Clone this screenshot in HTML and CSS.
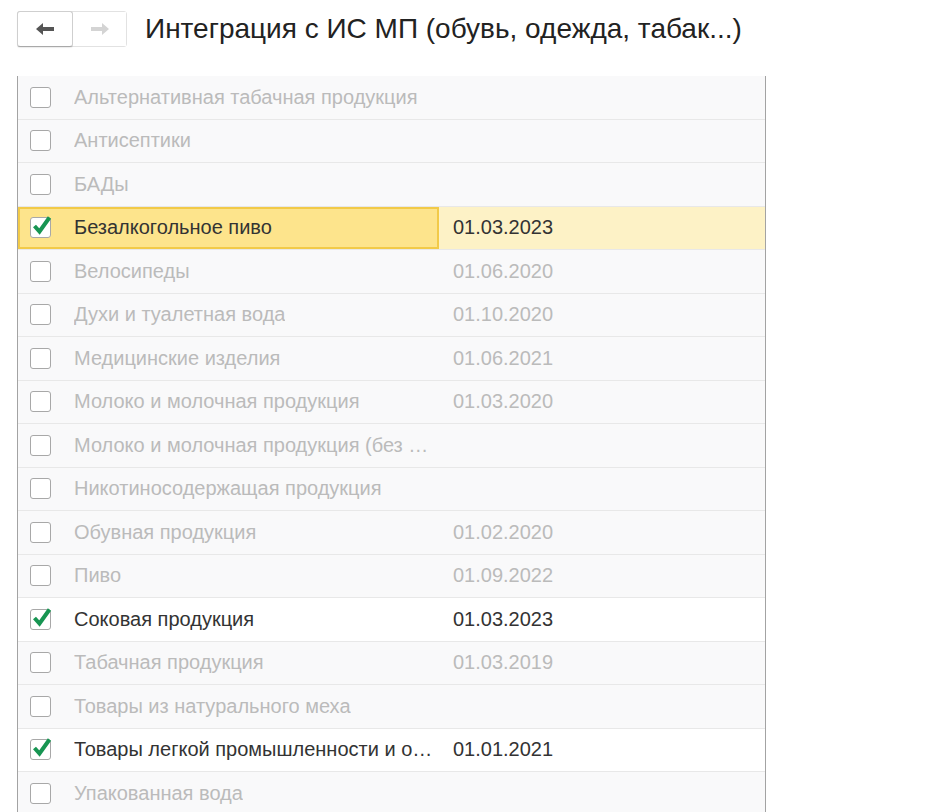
FILE: index.html
```html
<!DOCTYPE html>
<html lang="ru">
<head>
<meta charset="UTF-8">
<title>Интеграция с ИС МП</title>
<link rel="stylesheet" href="styles.css">
</head>
<body>
<div class="header">
    <div class="nav">
        <button class="nav-btn back" type="button">
            <svg width="20" height="14" viewBox="0 0 20 14"><path d="M1 7 L8 1 L8 5 L19 5 L19 9 L8 9 L8 13 Z" fill="#555"/></svg>
        </button>
        <button class="nav-btn fwd" type="button">
            <svg width="20" height="14" viewBox="0 0 20 14"><path d="M19 7 L12 1 L12 5 L1 5 L1 9 L12 9 L12 13 Z" fill="#d4d4d4"/></svg>
        </button>
    </div>
    <h1 class="title">Интеграция с ИС МП (обувь, одежда, табак...)</h1>
</div>

<div class="list">
    <div class="row"><div class="name"><span class="cb"></span><span class="txt">Альтернативная табачная продукция</span></div><div class="date"></div></div>
    <div class="row"><div class="name"><span class="cb"></span><span class="txt">Антисептики</span></div><div class="date"></div></div>
    <div class="row"><div class="name"><span class="cb"></span><span class="txt">БАДы</span></div><div class="date"></div></div>
    <div class="row on current"><div class="name"><span class="cb"><svg width="22" height="22" viewBox="0 0 22 22"><path d="M3.5 10 L8.5 15.5 L18.5 1.5" fill="none" stroke="#179552" stroke-width="4"/></svg></span><span class="txt">Безалкогольное пиво</span></div><div class="date">01.03.2023</div></div>
    <div class="row"><div class="name"><span class="cb"></span><span class="txt">Велосипеды</span></div><div class="date">01.06.2020</div></div>
    <div class="row"><div class="name"><span class="cb"></span><span class="txt">Духи и туалетная вода</span></div><div class="date">01.10.2020</div></div>
    <div class="row"><div class="name"><span class="cb"></span><span class="txt">Медицинские изделия</span></div><div class="date">01.06.2021</div></div>
    <div class="row"><div class="name"><span class="cb"></span><span class="txt">Молоко и молочная продукция</span></div><div class="date">01.03.2020</div></div>
    <div class="row"><div class="name"><span class="cb"></span><span class="txt">Молоко и молочная продукция (без …</span></div><div class="date"></div></div>
    <div class="row"><div class="name"><span class="cb"></span><span class="txt">Никотиносодержащая продукция</span></div><div class="date"></div></div>
    <div class="row"><div class="name"><span class="cb"></span><span class="txt">Обувная продукция</span></div><div class="date">01.02.2020</div></div>
    <div class="row"><div class="name"><span class="cb"></span><span class="txt">Пиво</span></div><div class="date">01.09.2022</div></div>
    <div class="row on"><div class="name"><span class="cb"><svg width="22" height="22" viewBox="0 0 22 22"><path d="M3.5 10 L8.5 15.5 L18.5 1.5" fill="none" stroke="#179552" stroke-width="4"/></svg></span><span class="txt">Соковая продукция</span></div><div class="date">01.03.2023</div></div>
    <div class="row"><div class="name"><span class="cb"></span><span class="txt">Табачная продукция</span></div><div class="date">01.03.2019</div></div>
    <div class="row"><div class="name"><span class="cb"></span><span class="txt">Товары из натурального меха</span></div><div class="date"></div></div>
    <div class="row on"><div class="name"><span class="cb"><svg width="22" height="22" viewBox="0 0 22 22"><path d="M3.5 10 L8.5 15.5 L18.5 1.5" fill="none" stroke="#179552" stroke-width="4"/></svg></span><span class="txt">Товары легкой промышленности и о…</span></div><div class="date">01.01.2021</div></div>
    <div class="row last"><div class="name"><span class="cb"></span><span class="txt">Упакованная вода</span></div><div class="date"></div></div>
</div>
</body>
</html>
```

FILE: styles.css
```css
html, body {
    margin: 0;
    padding: 0;
    background: #fff;
    overflow: hidden;
}
body {
    font-family: "Liberation Sans", Arial, sans-serif;
    color: #333;
}
.header {
    display: flex;
    align-items: center;
    padding: 11px 0 0 17px;
    height: 36px;
}
.nav {
    display: flex;
    height: 36px;
    border: 1px solid #e2e2e2;
    border-radius: 3px;
    box-sizing: border-box;
    background: #fff;
}
.nav-btn {
    display: flex;
    align-items: center;
    justify-content: center;
    border: 0;
    background: #fff;
    padding: 0;
    height: 34px;
}
.nav-btn.back {
    width: 56px;
    border: 1px solid #cfcfcf;
    border-bottom-color: #a9a9a9;
    border-radius: 3px;
    margin: -1px 0 -1px -1px;
    height: 36px;
    box-shadow: 0 1px 1px rgba(0,0,0,0.08);
}
.nav-btn.fwd {
    width: 53px;
}
.title {
    margin: 0 0 0 18px;
    font-weight: normal;
    font-size: 28px;
    color: #222;
}
.list {
    margin: 29px 0 0 17px;
    width: 749px;
    border-left: 1px solid #a3a3a3;
    border-right: 1px solid #a3a3a3;
    box-sizing: border-box;
}
.row {
    display: flex;
    height: 43.5px;
    box-sizing: border-box;
    border-bottom: 1px solid #e8e8e8;
    background: #f9f9fa;
    font-size: 20px;
    color: #bbb;
}
.row.last {
    border-bottom: 0;
    height: 42px;
}
.row.on {
    background: #fff;
    color: #333;
}
.row.current {
    background: #fdf2c6;
}
.name {
    display: flex;
    align-items: center;
    width: 421px;
    padding-left: 12px;
    box-sizing: border-box;
}
.current .name {
    border: 2px solid #f2ca48;
    background: #fde48c;
    padding-left: 10px;
}
.cb {
    flex: none;
    width: 21px;
    height: 21px;
    border: 1px solid #a8a8a8;
    border-radius: 3px;
    box-sizing: border-box;
    background: #fff;
    position: relative;
}
.cb svg {
    position: absolute;
    left: 0;
    top: -2px;
}
.txt {
    margin-left: 23px;
    white-space: nowrap;
    overflow: hidden;
    text-overflow: ellipsis;
}
.date {
    display: flex;
    align-items: center;
    padding-left: 14px;
}
```
